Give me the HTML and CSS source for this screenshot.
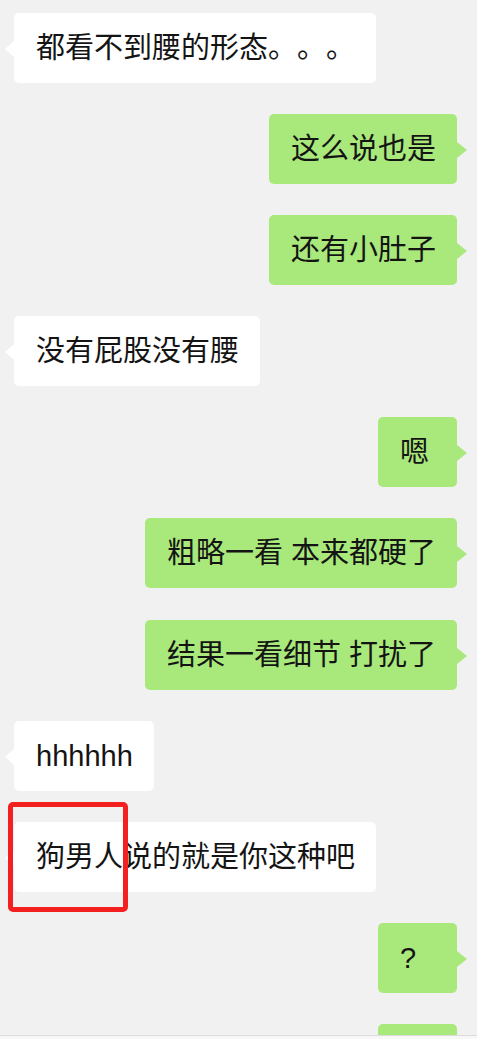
FILE: index.html
```html
<!DOCTYPE html>
<html lang="zh-CN">
<head>
<meta charset="utf-8">
<title>聊天记录</title>
<link rel="stylesheet" href="styles.css">
</head>
<body>
<div class="chat">
  <div class="row in"><div class="bubble">都看不到腰的形态。。。</div></div>
  <div class="row out"><div class="bubble">这么说也是</div></div>
  <div class="row out"><div class="bubble">还有小肚子</div></div>
  <div class="row in"><div class="bubble">没有屁股没有腰</div></div>
  <div class="row out"><div class="bubble">嗯</div></div>
  <div class="row out"><div class="bubble">粗略一看 本来都硬了</div></div>
  <div class="row out"><div class="bubble">结果一看细节 打扰了</div></div>
  <div class="row in"><div class="bubble">hhhhhh</div></div>
  <div class="row in"><div class="bubble">狗男人说的就是你这种吧</div></div>
  <div class="row out"><div class="bubble">?</div></div>
  <div class="row out"><div class="bubble bubble-cut">&nbsp;</div></div>
  <div class="mark"></div>
</div>
<div class="bottom-edge"></div>
</body>
</html>
```

FILE: styles.css
```css
html, body {
  margin: 0;
  padding: 0;
  height: 1039px;
  overflow: hidden;
  background: #f1f1f1;
}

.chat {
  position: relative;
  display: flex;
  flex-direction: column;
  gap: 31.1px;
  height: 1039px;
  box-sizing: border-box;
  overflow: hidden;
  padding: 13px 20px 0 14px;
  font-family: "Liberation Sans", "Noto Sans CJK SC", sans-serif;
  font-size: 29px;
  color: #141414;
  text-spacing-trim: space-all;
}

.row {
  display: flex;
  flex-shrink: 0;
}

.row.in {
  justify-content: flex-start;
}

.row.out {
  justify-content: flex-end;
}

.bubble {
  position: relative;
  box-sizing: border-box;
  height: 70px;
  min-width: 79px;
  padding: 15px 21px 15px 22px;
  line-height: 40px;
  border-radius: 5px;
  white-space: pre;
  text-spacing-trim: space-all;
}

.in .bubble {
  background: #ffffff;
}

.out .bubble {
  background: #a9e87b;
}

.in .bubble::before {
  content: "";
  position: absolute;
  left: -9px;
  top: 28px;
  border-top: 8px solid transparent;
  border-bottom: 8px solid transparent;
  border-right: 9px solid #ffffff;
}

.out .bubble::after {
  content: "";
  position: absolute;
  right: -10px;
  top: 28px;
  border-top: 8px solid transparent;
  border-bottom: 8px solid transparent;
  border-left: 10px solid #a9e87b;
}

.mark {
  position: absolute;
  left: 8px;
  top: 802px;
  width: 120px;
  height: 110px;
  box-sizing: border-box;
  border: 5px solid #f42020;
  border-radius: 5px;
}

.bottom-edge {
  position: absolute;
  left: 0;
  right: 0;
  top: 1035px;
  height: 4px;
  border-top: 1px solid #dcdcdc;
  background: #f7f7f7;
  box-sizing: border-box;
}
```
